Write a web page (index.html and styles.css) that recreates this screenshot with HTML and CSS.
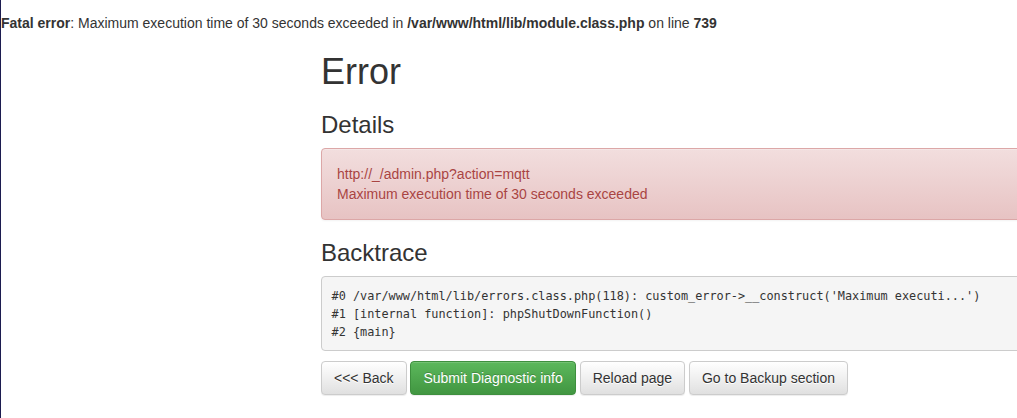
FILE: index.html
```html
<!DOCTYPE html>
<html>
<head>
<meta charset="utf-8">
<title>Error</title>
<link rel="stylesheet" href="styles.css">
</head>
<body>
<div class="fatal"><b>Fatal error</b>: Maximum execution time of 30 seconds exceeded in <b>/var/www/html/lib/module.class.php</b> on line <b>739</b></div>
<div class="container">
  <h1>Error</h1>
  <h3>Details</h3>
  <div class="alert">
    http://_/admin.php?action=mqtt<br>
    Maximum execution time of 30 seconds exceeded
  </div>
  <h3>Backtrace</h3>
  <pre class="trace">#0 /var/www/html/lib/errors.class.php(118): custom_error-&gt;__construct('Maximum executi...')
#1 [internal function]: phpShutDownFunction()
#2 {main}</pre>
  <div class="actions">
    <a class="btn btn-default">&lt;&lt;&lt; Back</a>
    <a class="btn btn-success">Submit Diagnostic info</a>
    <a class="btn btn-default">Reload page</a>
    <a class="btn btn-default">Go to Backup section</a>
  </div>
</div>
</body>
</html>
```
FILE: styles.css
```css
html, body {
  margin: 0;
  padding: 0;
  height: 100%;
  overflow: hidden;
  background: #fff;
}
body {
  border-left: 1px solid #1c1c50;
  box-sizing: border-box;
  font-family: "Liberation Sans", Arial, sans-serif;
  font-size: 14px;
  line-height: 20px;
  color: #333;
}
.fatal {
  padding-top: 13px;
  padding-left: 0;
  white-space: nowrap;
  height: 20px;
}
.container {
  margin-left: 320px;
  width: 940px;
}
h1, h3 {
  font-family: "Liberation Sans", Arial, sans-serif;
  font-weight: 500;
  color: #333;
  line-height: 1.1;
  margin: 20px 0 10px;
}
h1 {
  font-size: 36px;
  margin-top: 19px;
}
h3 {
  font-size: 24px;
}
.alert {
  box-sizing: border-box;
  padding: 15px;
  margin-bottom: 20px;
  border: 1px solid #dca7a7;
  border-radius: 4px;
  color: #a94442;
  background-color: #f2dede;
  background-image: linear-gradient(to bottom, #f2dede 0, #e7c3c3 100%);
  text-shadow: 0 1px 0 rgba(255,255,255,.2);
  box-shadow: inset 0 1px 0 rgba(255,255,255,.25), 0 1px 2px rgba(0,0,0,.05);
}
.trace {
  margin: 0 0 10px;
  padding: 9.5px;
  font-family: "DejaVu Sans Mono", "Liberation Mono", monospace;
  font-size: 11.85px;
  line-height: 18px;
  color: #333;
  background: #f5f5f5;
  border: 1px solid #ccc;
  border-radius: 4px;
  white-space: pre;
}
.actions {
  white-space: nowrap;
}
.btn {
  display: inline-block;
  padding: 6px 12px;
  font-size: 14px;
  line-height: 20px;
  border: 1px solid transparent;
  border-radius: 4px;
  text-decoration: none;
  vertical-align: middle;
  box-shadow: inset 0 1px 0 rgba(255,255,255,.15), 0 1px 1px rgba(0,0,0,.075);
}
.btn-default {
  color: #333;
  background-color: #fff;
  background-image: linear-gradient(to bottom, #fff 0, #e0e0e0 100%);
  border-color: #ccc;
  text-shadow: 0 1px 0 #fff;
}
.btn-success {
  color: #fff;
  background-color: #5cb85c;
  background-image: linear-gradient(to bottom, #5cb85c 0, #419641 100%);
  border-color: #3e8f3e;
  text-shadow: 0 -1px 0 rgba(0,0,0,.2);
}
```
